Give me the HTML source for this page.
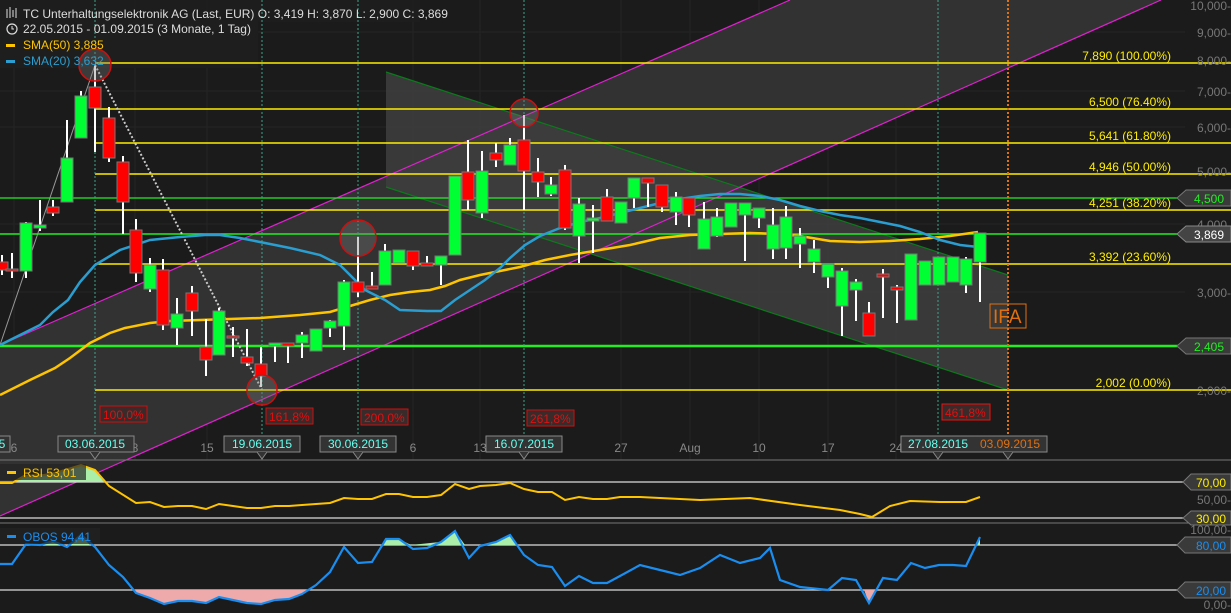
<!DOCTYPE html>
<html><head><meta charset="utf-8"><style>
html,body{margin:0;padding:0;background:#1b1b1b;width:1231px;height:613px;overflow:hidden}
svg{display:block;font-family:"Liberation Sans",sans-serif}
</style></head><body>
<svg width="1231" height="613" viewBox="0 0 1231 613" xmlns="http://www.w3.org/2000/svg">
<rect width="1231" height="613" fill="#1b1b1b"/>
<g stroke="#242424" stroke-width="1">
<line x1="0" y1="32" x2="1185" y2="32"/><line x1="0" y1="91" x2="1185" y2="91"/><line x1="0" y1="127" x2="1185" y2="127"/><line x1="0" y1="224" x2="1185" y2="224"/><line x1="0" y1="292" x2="1185" y2="292"/>
<line x1="14" y1="0" x2="14" y2="460"/><line x1="135" y1="0" x2="135" y2="460"/><line x1="207" y1="0" x2="207" y2="460"/><line x1="413" y1="0" x2="413" y2="460"/><line x1="480" y1="0" x2="480" y2="460"/><line x1="621" y1="0" x2="621" y2="460"/><line x1="690" y1="0" x2="690" y2="460"/><line x1="759" y1="0" x2="759" y2="460"/><line x1="828" y1="0" x2="828" y2="460"/><line x1="896" y1="0" x2="896" y2="460"/>
</g>
<polygon points="0,345 790,0 1161,0 0,516" fill="#323232"/>
<rect x="0" y="0" width="420" height="22" fill="#1e1e1e" opacity="0.9"/>
<rect x="0" y="20" width="258" height="48" fill="#1e1e1e" opacity="0.85"/>
<polygon points="386,72 1008,275 1008,390 386,187" fill="#3e3e3e" opacity="0.85"/>
<line x1="386" y1="72" x2="1008" y2="275" stroke="#0a7a1a" stroke-width="1.2"/>
<line x1="386" y1="187" x2="1008" y2="390" stroke="#0a7a1a" stroke-width="1.2"/>
<line x1="0" y1="345" x2="790" y2="0" stroke="#e020d0" stroke-width="1.2"/>
<line x1="0" y1="516" x2="1161" y2="0" stroke="#e020d0" stroke-width="1.2"/>
<g stroke="#ffee00" stroke-width="1.5">
<line x1="95" y1="63" x2="1231" y2="63"/><line x1="95" y1="109" x2="1231" y2="109"/><line x1="95" y1="143" x2="1231" y2="143"/><line x1="95" y1="174" x2="1231" y2="174"/><line x1="95" y1="210" x2="1231" y2="210"/><line x1="95" y1="264" x2="1231" y2="264"/><line x1="95" y1="390" x2="1231" y2="390"/>
</g>
<g stroke="#22ee22"><line x1="0" y1="198" x2="1190" y2="198" stroke-width="1.2"/><line x1="0" y1="234" x2="1190" y2="234" stroke-width="1.5"/><line x1="0" y1="346" x2="1190" y2="346" stroke-width="2.5"/></g>
<g stroke="#3aa88a" stroke-width="1" stroke-dasharray="2,2">
<line x1="95" y1="0" x2="95" y2="455"/><line x1="262" y1="0" x2="262" y2="455"/><line x1="358" y1="0" x2="358" y2="455"/><line x1="524" y1="0" x2="524" y2="455"/><line x1="938" y1="0" x2="938" y2="455"/>
</g>
<line x1="1008" y1="0" x2="1008" y2="455" stroke="#e07010" stroke-width="2" stroke-dasharray="2,2"/>
<line x1="0" y1="345" x2="95" y2="65" stroke="#999" stroke-width="1"/>
<line x1="95" y1="65" x2="262" y2="390" stroke="#ccc" stroke-width="2" stroke-dasharray="2,2"/>
<polyline fill="none" stroke="#ffc400" stroke-width="2.5" points="0,395 30,380 55,368 70,358 90,343 110,333 125,328 150,323 170,321 200,320 260,318 300,315 330,312 350,306 370,300 390,295 410,292 430,290 445,286 460,280 480,275 500,271 520,267 545,260 570,255 600,250 630,245 660,238 690,235 720,234 750,233 780,234 800,236 830,241 860,242 890,241 920,239 950,236 978,232"/>
<polyline fill="none" stroke="#2a9ed0" stroke-width="2.5" points="0,345 20,335 40,325 53,312 68,300 80,282 95,265 120,250 150,240 180,237 205,235 220,235 240,238 260,242 290,248 320,255 340,265 350,275 365,290 385,300 400,310 427,311 441,311 455,300 470,290 485,280 500,268 510,258 525,245 540,236 560,228 580,222 600,218 620,213 640,208 660,203 680,199 700,196 720,194 740,194 760,196 780,200 800,206 820,211 840,215 860,218 880,222 900,226 920,232 940,240 960,245 978,247"/>
<g stroke="#fff" stroke-width="2">
<line x1="2" y1="255" x2="2" y2="275"/><line x1="12" y1="253" x2="12" y2="278"/><line x1="26" y1="222" x2="26" y2="278"/><line x1="40" y1="200" x2="40" y2="231"/><line x1="53" y1="200" x2="53" y2="216"/><line x1="67" y1="120" x2="67" y2="202"/><line x1="81" y1="91" x2="81" y2="138"/><line x1="95" y1="66" x2="95" y2="152"/><line x1="109" y1="107" x2="109" y2="162"/><line x1="123" y1="156" x2="123" y2="234"/><line x1="136" y1="219" x2="136" y2="282"/><line x1="150" y1="258" x2="150" y2="292"/><line x1="163" y1="259" x2="163" y2="330"/><line x1="177" y1="298" x2="177" y2="345"/><line x1="192" y1="286" x2="192" y2="336"/><line x1="206" y1="319" x2="206" y2="376"/><line x1="219" y1="308" x2="219" y2="355"/><line x1="233" y1="327" x2="233" y2="357"/><line x1="247" y1="329" x2="247" y2="366"/><line x1="261" y1="347" x2="261" y2="387"/><line x1="275" y1="343" x2="275" y2="362"/><line x1="288" y1="343" x2="288" y2="363"/><line x1="302" y1="332" x2="302" y2="358"/><line x1="330" y1="320" x2="330" y2="337"/><line x1="344" y1="280" x2="344" y2="350"/><line x1="358" y1="237" x2="358" y2="297"/><line x1="372" y1="272" x2="372" y2="289"/><line x1="385" y1="244" x2="385" y2="285"/><line x1="413" y1="251" x2="413" y2="270"/><line x1="427" y1="256" x2="427" y2="266"/><line x1="441" y1="256" x2="441" y2="285"/><line x1="468" y1="140" x2="468" y2="210"/><line x1="482" y1="151" x2="482" y2="218"/><line x1="496" y1="143" x2="496" y2="167"/><line x1="510" y1="138" x2="510" y2="165"/><line x1="524" y1="115" x2="524" y2="210"/><line x1="538" y1="158" x2="538" y2="197"/><line x1="551" y1="177" x2="551" y2="196"/><line x1="565" y1="165" x2="565" y2="230"/><line x1="579" y1="198" x2="579" y2="263"/><line x1="593" y1="205" x2="593" y2="253"/><line x1="607" y1="189" x2="607" y2="221"/><line x1="634" y1="178" x2="634" y2="208"/><line x1="648" y1="178" x2="648" y2="207"/><line x1="662" y1="185" x2="662" y2="212"/><line x1="676" y1="192" x2="676" y2="225"/><line x1="689" y1="198" x2="689" y2="227"/><line x1="704" y1="202" x2="704" y2="249"/><line x1="717" y1="208" x2="717" y2="237"/><line x1="745" y1="203" x2="745" y2="261"/><line x1="759" y1="208" x2="759" y2="228"/><line x1="773" y1="208" x2="773" y2="259"/><line x1="786" y1="206" x2="786" y2="259"/><line x1="800" y1="228" x2="800" y2="268"/><line x1="814" y1="240" x2="814" y2="273"/><line x1="828" y1="264" x2="828" y2="288"/><line x1="842" y1="268" x2="842" y2="336"/><line x1="856" y1="279" x2="856" y2="321"/><line x1="869" y1="302" x2="869" y2="336"/><line x1="883" y1="269" x2="883" y2="318"/><line x1="897" y1="285" x2="897" y2="323"/><line x1="966" y1="257" x2="966" y2="293"/><line x1="980" y1="233" x2="980" y2="302"/>
</g>
<g stroke="#777" stroke-width="1" fill="#00ff33">
<rect x="20" y="223" width="12" height="48"/><rect x="34" y="225" width="12" height="3"/><rect x="61" y="158" width="12" height="44"/><rect x="75" y="96" width="12" height="42"/><rect x="144" y="265" width="12" height="24"/><rect x="171" y="314" width="12" height="14"/><rect x="213" y="311" width="12" height="44"/><rect x="269" y="343" width="12" height="3"/><rect x="296" y="335" width="12" height="8"/><rect x="310" y="329" width="12" height="22"/><rect x="324" y="321" width="12" height="7"/><rect x="338" y="282" width="12" height="44"/><rect x="379" y="251" width="12" height="34"/><rect x="393" y="250" width="12" height="13"/><rect x="435" y="256" width="12" height="9"/><rect x="449" y="176" width="12" height="79"/><rect x="476" y="171" width="12" height="42"/><rect x="504" y="145" width="12" height="20"/><rect x="545" y="185" width="12" height="9"/><rect x="573" y="204" width="12" height="32"/><rect x="587" y="218" width="12" height="3"/><rect x="615" y="202" width="12" height="21"/><rect x="628" y="178" width="12" height="20"/><rect x="670" y="197" width="12" height="15"/><rect x="698" y="219" width="12" height="30"/><rect x="711" y="217" width="12" height="19"/><rect x="725" y="203" width="12" height="24"/><rect x="739" y="203" width="12" height="12"/><rect x="753" y="208" width="12" height="10"/><rect x="767" y="225" width="12" height="24"/><rect x="780" y="217" width="12" height="31"/><rect x="794" y="236" width="12" height="8"/><rect x="808" y="249" width="12" height="13"/><rect x="822" y="264" width="12" height="13"/><rect x="836" y="271" width="12" height="35"/><rect x="850" y="282" width="12" height="8"/><rect x="905" y="254" width="12" height="66"/><rect x="919" y="261" width="12" height="24"/><rect x="933" y="257" width="12" height="28"/><rect x="947" y="257" width="12" height="25"/><rect x="960" y="259" width="12" height="26"/><rect x="974" y="233" width="12" height="29"/>
</g>
<g stroke="#777" stroke-width="1" fill="#ff0000">
<rect x="-4" y="262" width="12" height="8"/><rect x="6" y="269" width="12" height="2"/><rect x="47" y="207" width="12" height="6"/><rect x="89" y="87" width="12" height="21"/><rect x="103" y="118" width="12" height="40"/><rect x="117" y="162" width="12" height="40"/><rect x="130" y="230" width="12" height="43"/><rect x="157" y="270" width="12" height="55"/><rect x="186" y="293" width="12" height="18"/><rect x="200" y="347" width="12" height="13"/><rect x="227" y="336" width="12" height="2"/><rect x="241" y="357" width="12" height="6"/><rect x="255" y="364" width="12" height="12"/><rect x="282" y="343" width="12" height="3"/><rect x="352" y="282" width="12" height="10"/><rect x="366" y="286" width="12" height="3"/><rect x="407" y="251" width="12" height="15"/><rect x="421" y="263" width="12" height="3"/><rect x="462" y="172" width="12" height="28"/><rect x="490" y="153" width="12" height="7"/><rect x="518" y="140" width="12" height="31"/><rect x="532" y="172" width="12" height="10"/><rect x="559" y="170" width="12" height="58"/><rect x="601" y="197" width="12" height="24"/><rect x="642" y="178" width="12" height="5"/><rect x="656" y="185" width="12" height="22"/><rect x="683" y="198" width="12" height="17"/><rect x="863" y="313" width="12" height="23"/><rect x="877" y="274" width="12" height="3"/><rect x="891" y="287" width="12" height="3"/>
</g>
<g fill="rgba(120,120,120,0.35)" stroke="#cc1010" stroke-width="1.5">
<circle cx="95" cy="65" r="16"/><circle cx="524" cy="113" r="14"/><circle cx="358" cy="238" r="18"/><circle cx="262" cy="390" r="15"/>
</g>
<g font-size="12" fill="#e01010">
<rect x="100" y="406" width="47" height="16" fill="#3a2a2a" stroke="#cc1010"/><text x="103" y="419">100,0%</text>
<rect x="266" y="408" width="47" height="16" fill="#3a2a2a" stroke="#cc1010"/><text x="269" y="421">161,8%</text>
<rect x="361" y="409" width="47" height="16" fill="#3a2a2a" stroke="#cc1010"/><text x="364" y="422">200,0%</text>
<rect x="527" y="410" width="47" height="16" fill="#3a2a2a" stroke="#cc1010"/><text x="530" y="423">261,8%</text>
<rect x="942" y="404" width="48" height="16" fill="#3a2a2a" stroke="#ee1010"/><text x="945" y="417">461,8%</text>
</g>
<rect x="990" y="304" width="36" height="24" fill="none" stroke="#e07010"/>
<text x="993" y="323" font-size="19" fill="#e07010">IFA</text>
<g font-size="12" fill="#ffee00" text-anchor="end">
<text x="1171" y="60">7,890 (100.00%)</text><text x="1171" y="106">6,500 (76.40%)</text><text x="1171" y="140">5,641 (61.80%)</text><text x="1171" y="171">4,946 (50.00%)</text><text x="1171" y="207">4,251 (38.20%)</text><text x="1171" y="261">3,392 (23.60%)</text><text x="1171" y="387">2,002 (0.00%)</text>
</g>
<g font-size="12" fill="#777" text-anchor="end">
<text x="1231" y="10">10,000-</text><text x="1231" y="37">9,000-</text><text x="1231" y="65">8,000-</text><text x="1231" y="96">7,000-</text><text x="1231" y="132">6,000-</text><text x="1231" y="176">5,000-</text><text x="1231" y="229">4,000-</text><text x="1231" y="297">3,000-</text><text x="1231" y="395">2,000-</text>
</g>
<g font-size="12" text-anchor="middle">
<polygon points="1177,198 1186,190 1231,190 1231,206 1186,206" fill="#3a3a3a" stroke="#777"/><text x="1209" y="203" fill="#22ee22">4,500</text>
<polygon points="1177,234 1186,226 1231,226 1231,242 1186,242" fill="#444" stroke="#888"/><text x="1209" y="239" fill="#fff">3,869</text>
<polygon points="1177,346 1186,338 1231,338 1231,354 1186,354" fill="#3a3a3a" stroke="#777"/><text x="1209" y="351" fill="#22ee22">2,405</text>
</g>
<g font-size="12">
<g stroke="#ddd" stroke-width="1" fill="none"><line x1="7" y1="9" x2="7" y2="18"/><line x1="10" y1="7" x2="10" y2="18"/><line x1="13" y1="10" x2="13" y2="17"/><line x1="16" y1="8" x2="16" y2="18"/></g>
<text x="23" y="18" fill="#ddd">TC Unterhaltungselektronik AG (Last, EUR)  O: 3,419  H: 3,870  L: 2,900  C: 3,869</text>
<circle cx="12" cy="29" r="5" fill="none" stroke="#ddd" stroke-width="1.2"/><path d="M12 26v3h2" stroke="#ddd" fill="none"/>
<text x="23" y="33" fill="#ddd">22.05.2015 - 01.09.2015 (3 Monate, 1 Tag)</text>
<rect x="6" y="44" width="9" height="3" fill="#ffc400"/><text x="23" y="49" fill="#ffc400">SMA(50)  3,885</text>
<rect x="6" y="60" width="9" height="3" fill="#2a9ed0"/><text x="23" y="65" fill="#2a9ed0">SMA(20)  3,632</text>
</g>
<line x1="0" y1="460" x2="1231" y2="460" stroke="#777"/>
<g font-size="12" fill="#888" text-anchor="middle">
<text x="14" y="452">6</text><text x="135" y="452">8</text><text x="207" y="452">15</text><text x="413" y="452">6</text><text x="480" y="452">13</text><text x="621" y="452">27</text><text x="690" y="452">Aug</text><text x="759" y="452">10</text><text x="828" y="452">17</text><text x="896" y="452">24</text>
</g>
<g font-size="12" text-anchor="middle">
<rect x="-4" y="436" width="14" height="16" fill="#333" stroke="#888"/><text x="2" y="448" fill="#6fe">5</text>
<rect x="58" y="436" width="76" height="16" fill="#333" stroke="#888"/><text x="95" y="448" fill="#6fe">03.06.2015</text><path d="M90 452 L95 459 L100 452" fill="#333" stroke="#888"/>
<rect x="224" y="436" width="76" height="16" fill="#333" stroke="#888"/><text x="262" y="448" fill="#6fe">19.06.2015</text><path d="M257 452 L262 459 L267 452" fill="#333" stroke="#888"/>
<rect x="320" y="436" width="76" height="16" fill="#333" stroke="#888"/><text x="358" y="448" fill="#6fe">30.06.2015</text><path d="M353 452 L358 459 L363 452" fill="#333" stroke="#888"/>
<rect x="486" y="436" width="76" height="16" fill="#333" stroke="#888"/><text x="524" y="448" fill="#6fe">16.07.2015</text><path d="M519 452 L524 459 L529 452" fill="#333" stroke="#888"/>
<rect x="901" y="436" width="146" height="16" fill="#333" stroke="#888"/><text x="938" y="448" fill="#6fe">27.08.2015</text><text x="1010" y="448" fill="#e07010">03.09.2015</text><path d="M933 452 L938 459 L943 452" fill="#333" stroke="#888"/><path d="M1003 452 L1008 459 L1013 452" fill="#333" stroke="#888"/>
</g>
<line x1="0" y1="482" x2="1190" y2="482" stroke="#ddd" stroke-width="1.2"/>
<line x1="0" y1="518" x2="1190" y2="518" stroke="#ddd" stroke-width="1.2"/>
<line x1="0" y1="523" x2="1231" y2="523" stroke="#777"/>
<polygon points="12,482 24,476 44,475 55,473 81,465 95,470 104,482" fill="#aaeeaa"/>
<polyline fill="none" stroke="#ffc400" stroke-width="2" points="0,483 12,483 24,476 44,475 55,473 81,465 95,470 109,486 136,503 150,502 164,507 178,506 192,506 206,509 219,504 233,506 247,508 261,508 275,506 289,506 302,505 316,504 330,503 344,498 358,499 372,499 386,494 399,494 413,497 427,497 441,495 455,484 469,489 480,486 496,485 510,483 524,489 538,492 552,492 565,500 579,497 593,499 607,499 620,497 640,497 680,499 700,500 750,498 800,505 840,510 860,514 872,517 890,506 910,501 940,502 966,502 980,497"/>
<rect x="0" y="464" width="86" height="16" fill="#222" opacity="0.7"/>
<rect x="7" y="471" width="9" height="3" fill="#ffc400"/><text x="23" y="477" font-size="12" fill="#ffc400">RSI  53,01</text>
<line x1="0" y1="545" x2="1190" y2="545" stroke="#ddd" stroke-width="1.2"/>
<line x1="0" y1="590" x2="1190" y2="590" stroke="#ddd" stroke-width="1.2"/>
<polygon points="21,545 40,545 53,541 67,547 81,535 90,545" fill="#aaeeaa"/>
<polygon points="383,545 385,539 399,539 411,545 440,542 455,531 465,545 480,545 496,542 510,535 518,545" fill="#aaeeaa"/>
<polygon points="133,590 137,593 150,598 164,604 178,601 192,601 206,603 219,597 233,600 247,603 261,604 275,600 289,599 302,594 306,590" fill="#eeaaaa"/>
<polygon points="864,590 869,603 875,590" fill="#eeaaaa"/>
<polygon points="977,545 980,537 980,545" fill="#aaeeaa"/>
<polyline fill="none" stroke="#1a8ef0" stroke-width="2.2" points="0,564 12,564 26,544 40,545 53,541 67,547 81,535 95,547 109,565 123,577 136,593 150,598 164,604 178,601 192,601 206,603 219,597 233,600 247,603 261,604 275,600 289,599 302,594 316,585 330,572 344,547 358,563 372,562 386,539 399,539 413,549 427,548 441,542 455,531 469,558 480,546 496,542 510,535 524,555 538,565 552,567 565,586 579,576 593,583 607,583 620,576 640,565 660,570 680,575 700,568 720,555 740,563 760,558 770,548 780,580 800,587 828,590 842,578 856,580 869,603 883,578 897,580 911,563 925,568 939,565 953,565 966,566 980,537"/>
<rect x="0" y="528" width="100" height="16" fill="#222" opacity="0.7"/>
<rect x="7" y="535" width="9" height="3" fill="#1a8ef0"/><text x="23" y="541" font-size="12" fill="#1a8ef0">OBOS  94,41</text>
<g font-size="12" text-anchor="end">
<polygon points="1183,482 1191,474 1231,474 1231,490 1191,490" fill="#3a3a3a" stroke="#777"/><text x="1226" y="487" fill="#ffee00">70,00</text>
<text x="1231" y="504" fill="#777">50,00-</text>
<polygon points="1183,518 1191,511 1231,511 1231,525 1191,525" fill="#3a3a3a" stroke="#777"/><text x="1226" y="523" fill="#ffee00">30,00</text>
<text x="1231" y="534" fill="#777">100,00-</text>
<polygon points="1177,545 1185,537 1231,537 1231,553 1185,553" fill="#3a3a3a" stroke="#777"/><text x="1226" y="550" fill="#1a8ef0">80,00</text>
<polygon points="1177,590 1185,582 1231,582 1231,598 1185,598" fill="#3a3a3a" stroke="#777"/><text x="1226" y="595" fill="#1a8ef0">20,00</text>
<text x="1231" y="609" fill="#777">0,00-</text>
</g>
</svg>
</body></html>
